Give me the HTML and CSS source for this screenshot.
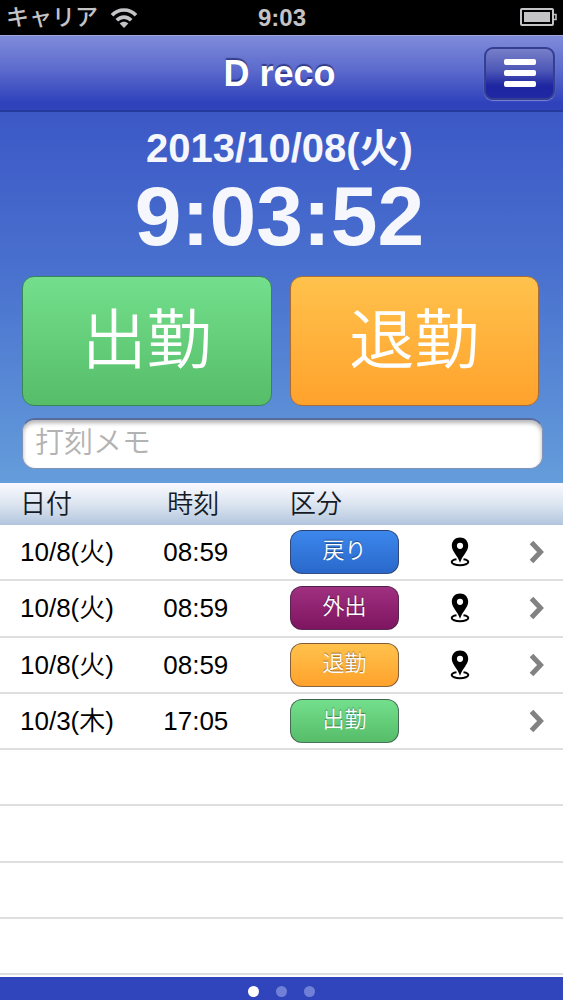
FILE: index.html
```html
<!DOCTYPE html>
<html lang="ja">
<head>
<meta charset="utf-8">
<meta name="viewport" content="width=device-width, initial-scale=1">
<title>D reco</title>
<link rel="stylesheet" href="styles.css">
</head>
<body>
<svg class="defs" aria-hidden="true">
  <symbol id="pin" viewBox="0 0 20 30">
    <path fill="currentColor" fill-rule="evenodd" d="M10 .5C5.200.500 1.800 4 1.800 8.700c0 5.500 5.500 9.300 8.200 17 2.700-7.700 8.200-11.500 8.200-17C18.200 4 14.800.500 10 .5zm0 5.200a3.100 3.100 0 1 1 0 6.200 3.100 3.100 0 0 1 0-6.200z"/>
    <path fill="none" stroke="currentColor" stroke-width="2" d="M6.500 22.300C3.500 22.800 1.700 23.700 1.700 25c0 1.800 3.700 3.200 8.300 3.200s8.300-1.400 8.300-3.200c0-1.300-1.800-2.200-4.800-2.700"/>
  </symbol>
  <symbol id="chevron" viewBox="0 0 16 24">
    <path fill="none" stroke="currentColor" stroke-width="5" d="M2.500 2.500 11.500 12l-9 9.500"/>
  </symbol>
</svg>
<div class="app">
  <div class="status">
    <div class="carrier">
      <span>キャリア</span>
      <svg class="wifi" viewBox="0 0 28 22" aria-hidden="true">
        <path fill="none" stroke="currentColor" stroke-width="3.600" d="M2 8.300C8.500 1.200 19.500 1.200 26 8.300M6.800 13.300c4-4.300 10.400-4.300 14.400 0"/>
        <path fill="currentColor" d="M14 21l-4.300-4.400c2.400-2.400 6.200-2.400 8.600 0z"/>
      </svg>
    </div>
    <span class="clock">9:03</span>
    <svg class="battery" viewBox="0 0 38 20" aria-hidden="true">
      <rect x="1" y="2" width="32" height="16" rx="1" fill="none" stroke="currentColor" stroke-width="2"/>
      <rect x="4" y="5" width="26" height="10" fill="currentColor"/>
      <path fill="none" stroke="currentColor" stroke-width="1.500" d="M33 7.500h3v5h-3"/>
    </svg>
  </div>

  <header class="navbar">
    <h1 class="title">D reco</h1>
    <button class="menu" type="button" aria-label="メニュー">
      <span class="bar"></span><span class="bar"></span><span class="bar"></span>
    </button>
  </header>

  <main class="main">
    <section class="punch">
      <div class="date">2013/10/08(火)</div>
      <div class="time">9:03:52</div>
      <div class="actions">
        <button class="action green" type="button">出勤</button>
        <button class="action orange" type="button">退勤</button>
      </div>
      <input class="memo" type="text" placeholder="打刻メモ" aria-label="打刻メモ">
    </section>

    <section class="history">
      <table class="log">
        <colgroup><col class="c-date"><col class="c-time"><col class="c-kind"><col class="c-pin"><col class="c-more"></colgroup>
        <thead>
          <tr><th class="first">日付</th><th class="th-time">時刻</th><th>区分</th><th></th><th></th></tr>
        </thead>
        <tbody>
          <tr><td class="first">10/8(火)</td><td>08:59</td><td><span class="tag blue">戻り</span></td><td class="icon"><svg class="pin" role="img" aria-label="位置情報"><use href="#pin"/></svg></td><td class="icon"><button class="more" type="button" aria-label="詳細"><svg class="chevron"><use href="#chevron"/></svg></button></td></tr>
          <tr><td class="first">10/8(火)</td><td>08:59</td><td><span class="tag purple">外出</span></td><td class="icon"><svg class="pin" role="img" aria-label="位置情報"><use href="#pin"/></svg></td><td class="icon"><button class="more" type="button" aria-label="詳細"><svg class="chevron"><use href="#chevron"/></svg></button></td></tr>
          <tr><td class="first">10/8(火)</td><td>08:59</td><td><span class="tag orange">退勤</span></td><td class="icon"><svg class="pin" role="img" aria-label="位置情報"><use href="#pin"/></svg></td><td class="icon"><button class="more" type="button" aria-label="詳細"><svg class="chevron"><use href="#chevron"/></svg></button></td></tr>
          <tr><td class="first">10/3(木)</td><td>17:05</td><td><span class="tag green">出勤</span></td><td></td><td class="icon"><button class="more" type="button" aria-label="詳細"><svg class="chevron"><use href="#chevron"/></svg></button></td></tr>
          <tr><td colspan="5"></td></tr>
          <tr><td colspan="5"></td></tr>
          <tr><td colspan="5"></td></tr>
          <tr><td colspan="5"></td></tr>
        </tbody>
      </table>
    </section>
  </main>

  <nav class="pager" aria-label="ページ">
    <button class="dot current" type="button" aria-label="1" aria-current="page"></button>
    <button class="dot" type="button" aria-label="2"></button>
    <button class="dot" type="button" aria-label="3"></button>
  </nav>
</div>
</body>
</html>
```

FILE: styles.css
```css
* {
  box-sizing: border-box;
}

body {
  margin: 0;
  background: #fff;
  color: #000;
  font-family: "Liberation Sans", "Noto Sans CJK JP", sans-serif;
}

button,
input {
  margin: 0;
  padding: 0;
  border: 0;
  font: inherit;
}

.defs {
  display: none;
}

.app {
  display: flex;
  flex-direction: column;
  min-height: 100vh;
}

/* Status bar */
.status {
  display: grid;
  grid-template-columns: 1fr auto 1fr;
  align-items: center;
  height: 35px;
  padding: 0 5px 0 6px;
  background: #000;
  color: #c4c3c6;
  font-size: 24px;
  line-height: 32px;
}

.carrier {
  display: flex;
  align-items: center;
  gap: 12px;
  font-size: 23px;
  font-weight: 500;
}

.carrier span {
  padding-bottom: 2px;
}

.wifi {
  width: 28px;
  height: 22px;
}

.clock {
  font-weight: 700;
}

.battery {
  justify-self: end;
  width: 38px;
  height: 20px;
  margin-bottom: 2px;
}

/* Navigation bar */
.navbar {
  display: grid;
  grid-template-columns: 1fr auto 1fr;
  align-items: center;
  height: 77px;
  padding: 0 8px 0 4px;
  border-top: 1px solid #a0a5dc;
  border-bottom: 2px solid #263a9e;
  background: linear-gradient(#7f8bd9, #5c6bcd 45%, #2f42bb 90%, #3043bb);
}

.title {
  grid-column: 2;
  margin: 0;
  padding-top: 2px;
  color: #fff;
  font-size: 36px;
  line-height: 40px;
  text-shadow: 0 -2px 1px rgba(20, 25, 90, 0.6);
}

.menu {
  display: flex;
  flex-direction: column;
  align-items: center;
  justify-content: center;
  justify-self: end;
  gap: 5px;
  width: 71px;
  height: 53px;
  border: 2px solid #353f91;
  border-radius: 9px;
  background: linear-gradient(#777fc9, #4c56b6 45%, #1d25a0 75%, #2028a4);
  box-shadow: 0 1px 1px rgba(255, 255, 255, 0.35);
}

.bar {
  width: 32px;
  height: 6px;
  border-radius: 2px;
  background: #fff;
}

/* Clock and punch buttons */
.main {
  display: flex;
  flex: 1;
  flex-direction: column;
}

.punch {
  padding: 12px 20px 14px 22px;
  background: linear-gradient(#3c58c6, #4a72cf 45%, #649ddb);
}

.date,
.time {
  padding-right: 6px;
  color: #f5f7fc;
  font-weight: 700;
  text-align: center;
}

.date {
  font-size: 40px;
  line-height: 48px;
}

.time {
  font-size: 84px;
  line-height: 88px;
}

.actions {
  display: grid;
  grid-template-columns: 1fr 1fr;
  gap: 18px;
  margin: 16px 4px 12px 0;
}

.action {
  height: 130px;
  padding-bottom: 12px;
  border-radius: 12px;
  color: #fff;
  font-family: "Noto Sans CJK JP", sans-serif;
  font-size: 65px;
  font-weight: 350;
  line-height: 80px;
}

.green {
  border: 1px solid #39855a;
  background: linear-gradient(#73df8c, #56bd69);
}

.orange {
  border: 1px solid #a56d3b;
  background: linear-gradient(#ffc24c, #ffa22c);
}

.blue {
  background: linear-gradient(#3c87ec, #2a68cb);
}

.purple {
  background: linear-gradient(#a03080, #7e1560);
}

.memo {
  display: block;
  width: 100%;
  height: 51px;
  padding: 0 12px 2px;
  border: 1px solid #8293ba;
  border-top: 2px solid #596b9d;
  border-radius: 13px;
  background: #fff;
  box-shadow: inset 0 3px 4px rgba(0, 0, 0, 0.3);
  font-size: 29px;
  font-weight: 350;
}

.memo::placeholder {
  color: #b3b3b3;
  opacity: 1;
}

/* Punch history */
.history {
  display: grid;
  flex: 1;
  padding-bottom: 2px;
}

.log {
  width: 100%;
  border-collapse: separate;
  border-spacing: 0;
  table-layout: fixed;
  font-size: 26px;
  line-height: 32px;
}

.c-date {
  width: 29%;
}

.c-time {
  width: 22.5%;
}

.c-kind {
  width: 22%;
}

.c-pin {
  width: 16.5%;
}

.c-more {
  width: 10%;
}

.log th {
  height: 42px;
  padding: 0;
  background: linear-gradient(#fafaff, #dce5f0 50%, #b2c5de);
  color: #151b25;
  font-weight: 350;
  text-align: left;
}

.log td {
  height: 56px;
  padding: 0;
  border-bottom: 2px solid #dedfe0;
  font-weight: 350;
}

.log .first {
  padding-left: 20px;
}

.log .th-time {
  padding-left: 4px;
}

.log .icon {
  text-align: center;
}

.tag {
  display: block;
  width: 109px;
  height: 44px;
  border: 1px solid rgba(50, 40, 60, 0.6);
  border-radius: 12px;
  color: #fff;
  font-size: 22px;
  line-height: 40px;
  text-align: center;
  text-shadow: 0 -1px 1px rgba(0, 0, 0, 0.4);
}

.pin {
  display: block;
  width: 20px;
  height: 30px;
  margin: 0 auto;
}

.more {
  display: block;
  margin: 0 auto;
  padding-left: 4px;
  background: none;
  color: #828282;
}

.chevron {
  display: block;
  width: 16px;
  height: 24px;
}

/* Page indicator */
.pager {
  display: flex;
  align-items: center;
  justify-content: center;
  gap: 17px;
  height: 23px;
  padding-top: 5px;
  background: #3044bb;
}

.dot {
  width: 11px;
  height: 11px;
  border-radius: 50%;
  background: #7080d6;
}

.dot.current {
  background: #fff;
}
```
